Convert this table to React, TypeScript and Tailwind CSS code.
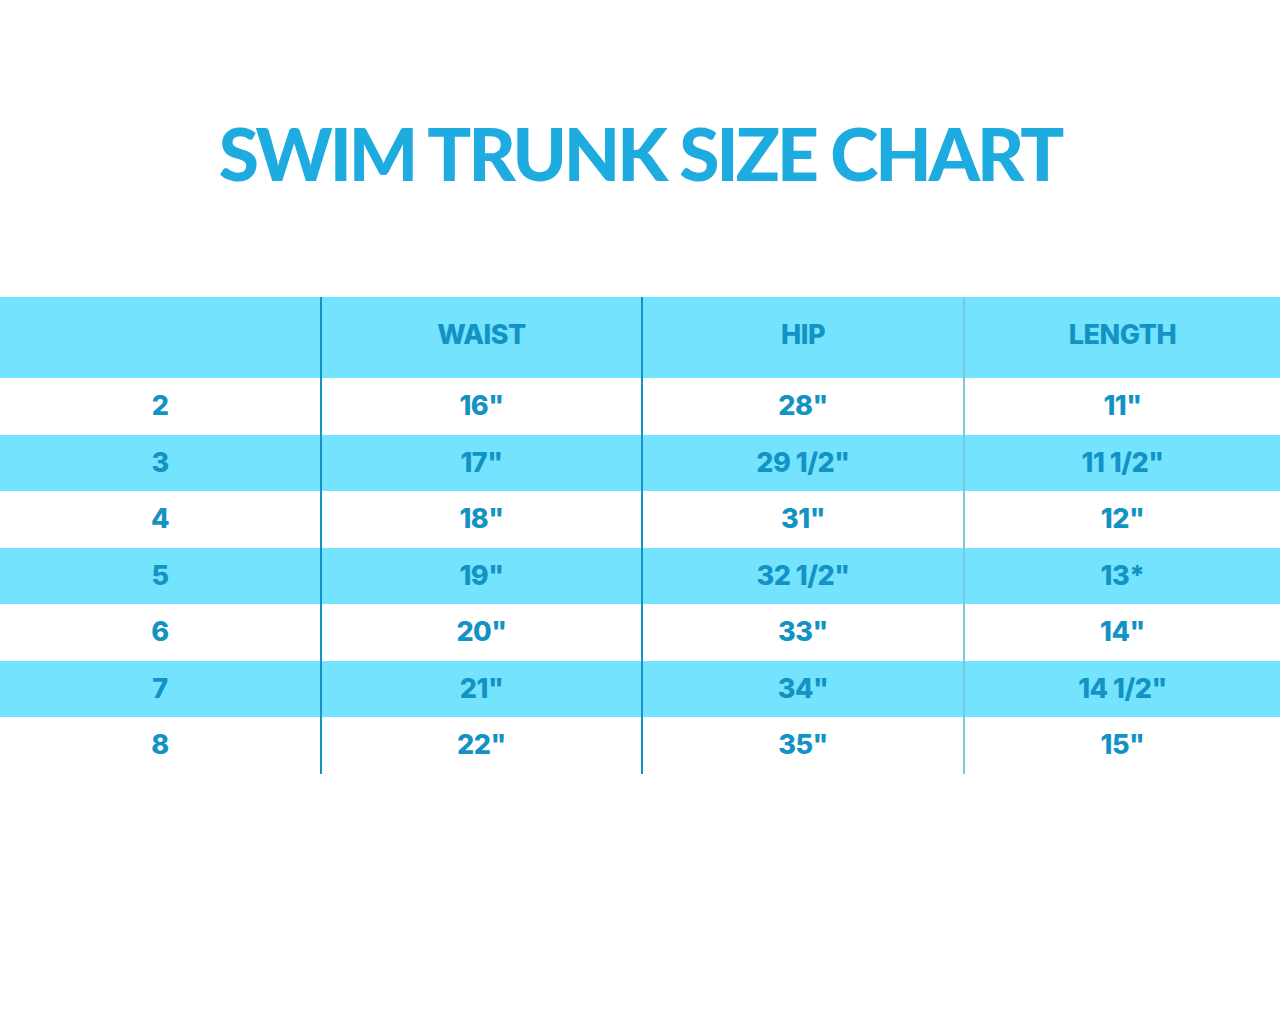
const rows: [string, string, string, string][] = [
  ["2", '16"', '28"', '11"'],
  ["3", '17"', '29 1/2"', '11 1/2"'],
  ["4", '18"', '31"', '12"'],
  ["5", '19"', '32 1/2"', "13*"],
  ["6", '20"', '33"', '14"'],
  ["7", '21"', '34"', '14 1/2"'],
  ["8", '22"', '35"', '15"'],
];

const cols = "grid grid-cols-[320px_321px_322px_317px]";

function Cell({ children, line, pad }: { children?: React.ReactNode; line?: string; pad?: boolean }) {
  return (
    <div className={`flex items-center justify-center ${pad ? "pb-[4px]" : ""} ${line ?? ""}`}>
      {children}
    </div>
  );
}

export default function App() {
  return (
    <div
      className="h-[1024px] w-[1280px] bg-white"
      style={{ fontFamily: "Inter, 'Liberation Sans', sans-serif" }}
    >
      <h1
        className="pt-[115px] text-center text-[73px] font-black leading-[76px] tracking-[-3px] text-[#1dabe0]"
        style={{ fontFamily: "Lato, 'Liberation Sans', sans-serif" }}
      >
        SWIM TRUNK SIZE CHART
      </h1>

      <div className="mt-[106px] text-[27px] font-extrabold tracking-[-0.5px] text-[#1393c4]">
        <div className={`${cols} h-[81px] bg-[#74e3fe]`}>
          <Cell pad />
          <Cell pad line="border-l-2 border-[#1593c4]">WAIST</Cell>
          <Cell pad line="border-l-2 border-[#1593c4]">HIP</Cell>
          <Cell pad line="border-l-2 border-[#7cc7df]">LENGTH</Cell>
        </div>
        {rows.map((r, i) => (
          <div
            key={r[0]}
            className={`${cols} h-[56.5px] ${i % 2 === 1 ? "bg-[#74e3fe]" : "bg-white"}`}
          >
            <Cell>{r[0]}</Cell>
            <Cell line="border-l-2 border-[#1593c4]">{r[1]}</Cell>
            <Cell line="border-l-2 border-[#1593c4]">{r[2]}</Cell>
            <Cell line="border-l-2 border-[#7cc7df]">{r[3]}</Cell>
          </div>
        ))}
      </div>
    </div>
  );
}
